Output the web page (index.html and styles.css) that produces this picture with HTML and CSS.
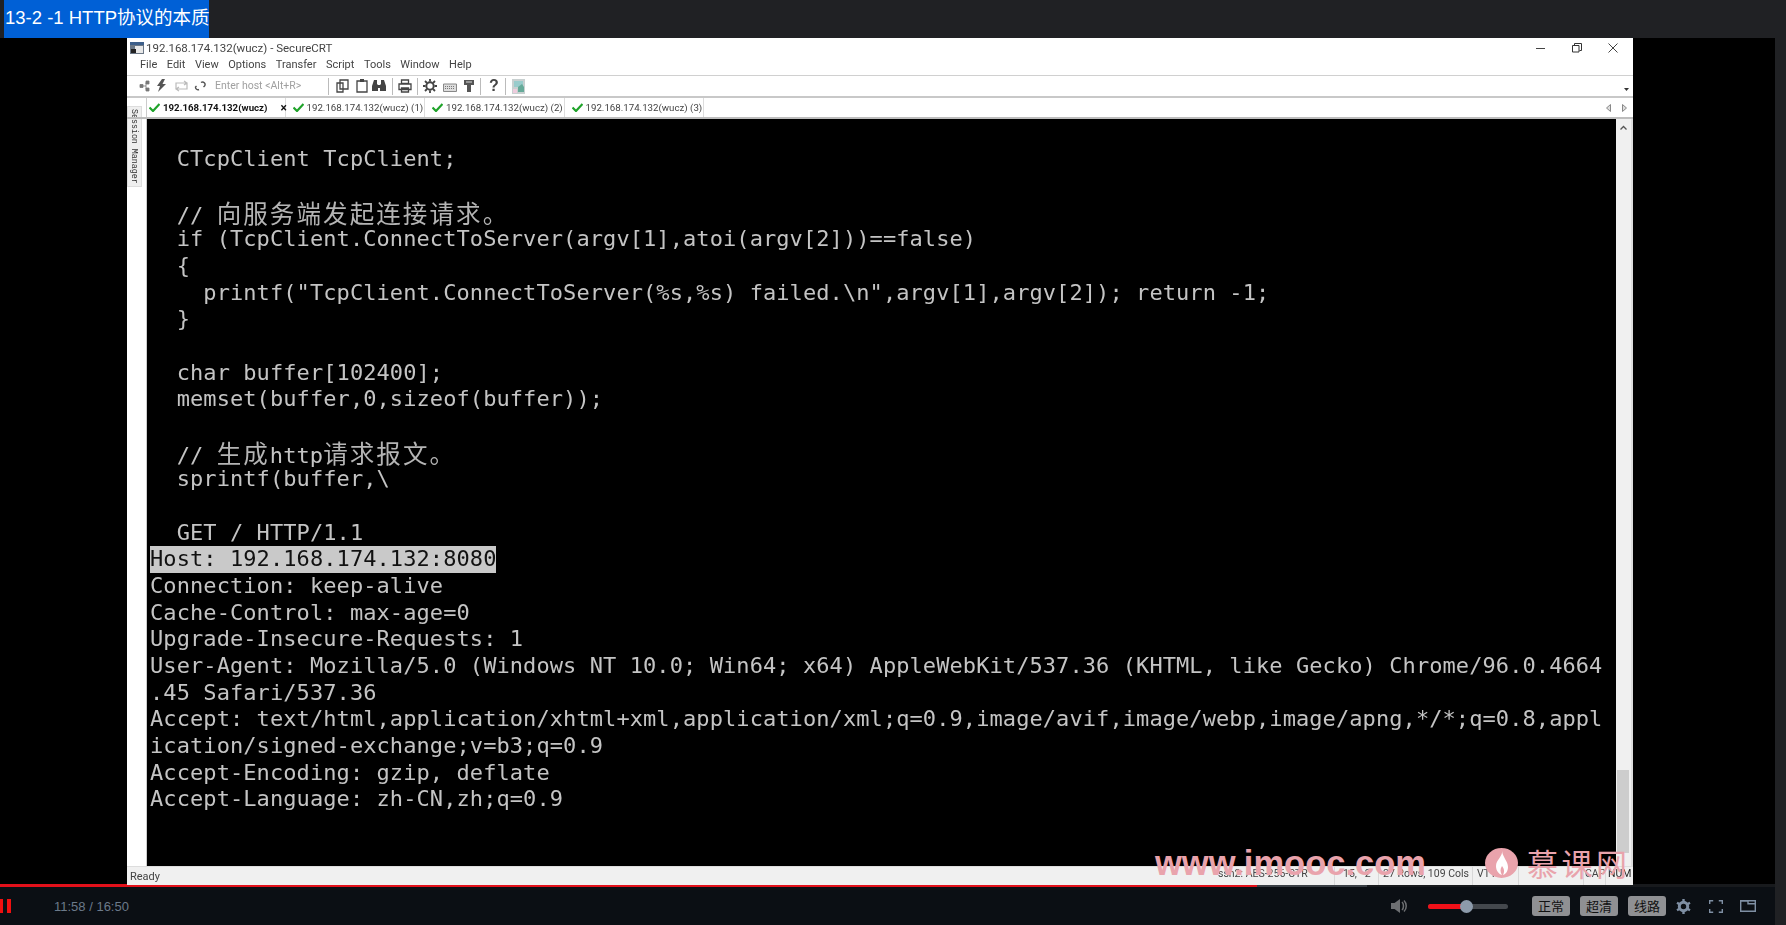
FILE: index.html
```html
<!DOCTYPE html>
<html lang="zh-CN">
<head>
<meta charset="utf-8">
<title>13-2 -1 HTTP协议的本质</title>
<link rel="stylesheet" href="styles.css">
</head>
<body>
<div class="page">
  <header class="topbar"><div class="course-title">13-2 -1 HTTP协议的本质</div></header>
  <div class="stage">
    <main class="video">
      <div class="crt">
        <div class="crt-title">
          <svg class="app-icon" width="16" height="14" viewBox="0 0 16 14"><rect x="1" y="1" width="14" height="12" fill="#6b7785"/><rect x="1" y="1" width="14" height="3" fill="#3d5f8a"/><rect x="6" y="5" width="8" height="7" fill="#e8e8e8"/><rect x="2" y="8" width="5" height="4" fill="#222"/></svg>
          <span class="crt-name">192.168.174.132(wucz) - SecureCRT</span>
          <div class="win-btns">
            <svg width="10" height="10" viewBox="0 0 10 10"><path d="M0 5.5h9" stroke="#444" fill="none"/></svg>
            <svg width="10" height="10" viewBox="0 0 10 10"><path d="M.5 2.500h6.500v6.500h-6.500zM2.500 2.500v-2h7v7h-2" stroke="#333" fill="none"/></svg>
            <svg width="10" height="10" viewBox="0 0 10 10"><path d="M.5.5l9 9M9.500.5l-9 9" stroke="#444" fill="none"/></svg>
          </div>
        </div>
        <nav class="crt-menu"><span>File</span><span>Edit</span><span>View</span><span>Options</span><span>Transfer</span><span>Script</span><span>Tools</span><span>Window</span><span>Help</span></nav>
        <div class="crt-tools">
          <svg class="t t-connect" width="11" height="12" viewBox="0 0 11 12"><path d="M7 1h3v3h-3zM7 8h3v3h-3zM1 4.500h3v3h-3zM4 6h3M7 2.500v7" fill="#777" stroke="#777" stroke-width=".8"/></svg>
          <svg class="t t-bolt" width="9" height="14" viewBox="0 0 9 14"><path d="M5 0L0 7h3L1 13 9 5H5.500L8 0z" fill="#555"/></svg>
          <svg class="t t-re" width="13" height="12" viewBox="0 0 13 12"><path d="M1 3h11v6h-11zM9 1l3 2-3 2M4 7l-3 2 3 2" fill="none" stroke="#bbb" stroke-width="1.200"/></svg>
          <svg class="t t-chain" width="12" height="12" viewBox="0 0 12 12"><path d="M7 2.500a2.500 2.500 0 0 1 3.500 3.500l-1 1M5 9.500a2.500 2.500 0 0 1-3.500-2.500l1-1" fill="none" stroke="#555" stroke-width="1.400"/></svg>
          <span class="host">Enter host &lt;Alt+R&gt;</span>
          <i class="sep s1"></i>
          <svg class="t t-copy" width="13" height="14" viewBox="0 0 13 14"><path d="M4 1h8v9h-8zM1 4h6v9h-6z" fill="#fff" stroke="#444" stroke-width="1.300"/></svg>
          <svg class="t t-paste" width="12" height="14" viewBox="0 0 12 14"><path d="M1 2h10v11h-10z" fill="#fff" stroke="#444" stroke-width="1.300"/><path d="M4 0h4v3h-4z" fill="#444"/></svg>
          <svg class="t t-find" width="14" height="14" viewBox="0 0 14 14"><path d="M2 1h3v4l1 1v6h-6v-5zM9 1h3l2 6v5h-6v-6l1-1zM5.500 6h3v3h-3z" fill="#444"/></svg>
          <i class="sep s2"></i>
          <svg class="t t-print" width="14" height="14" viewBox="0 0 14 14"><path d="M3.500 1h7v3.500h-7zM1 5h12v5.500h-12zM3.500 9h7v4h-7z" fill="#fff" stroke="#444" stroke-width="1.300"/></svg>
          <i class="sep s3"></i>
          <svg class="t t-gear" width="14" height="14" viewBox="0 0 14 14"><circle cx="7" cy="7" r="3.700" fill="none" stroke="#444" stroke-width="2"/><path d="M7 0v2.500M7 11.500v2.500M0 7h2.500M11.500 7h2.500M2 2l2 2M10 10l2 2M2 12l2-2M10 4l2-2" stroke="#444" stroke-width="1.800"/></svg>
          <svg class="t t-kbd" width="14" height="11" viewBox="0 0 14 11"><path d="M.5 3h13v7.500h-13z" fill="#ddd" stroke="#888"/><path d="M2 5.500h10M2 7.500h10" stroke="#777" stroke-dasharray="1 1"/></svg>
          <svg class="t t-key" width="12" height="14" viewBox="0 0 12 14"><path d="M1 1h10v5h-3v7h-4v-7h-3z" fill="#555"/><path d="M3 3h6" stroke="#ddd"/></svg>
          <i class="sep s4"></i>
          <span class="t t-help">?</span>
          <i class="sep s5"></i>
          <svg class="t t-img" width="13" height="15" viewBox="0 0 13 15"><path d="M0 0h13v15h-13z" fill="#c8d0d0"/><path d="M2 2h9v6h-9z" fill="#9cc"/><path d="M6 8l4-3 2 3v5h-6z" fill="#6a9"/><path d="M1 10h4v4h-4z" fill="#ecd"/></svg>
          <svg class="tool-drop" width="5" height="3" viewBox="0 0 5 3"><path d="M0 0h5l-2.500 3z" fill="#333"/></svg>
        </div>
        <div class="crt-tabs">
          <div class="tab active"><svg class="check" width="11" height="9" viewBox="0 0 11 9"><path d="M.5 4.500l3.500 3.500 6.500-7" fill="none" stroke="#1fa32a" stroke-width="2.200"/></svg><b>192.168.174.132(wucz)</b><span class="close">×</span></div>
          <div class="tab"><svg class="check" width="11" height="9" viewBox="0 0 11 9"><path d="M.5 4.500l3.500 3.500 6.500-7" fill="none" stroke="#1fa32a" stroke-width="2.200"/></svg><span>192.168.174.132(wucz) (1)</span></div>
          <div class="tab"><svg class="check" width="11" height="9" viewBox="0 0 11 9"><path d="M.5 4.500l3.500 3.500 6.500-7" fill="none" stroke="#1fa32a" stroke-width="2.200"/></svg><span>192.168.174.132(wucz) (2)</span></div>
          <div class="tab"><svg class="check" width="11" height="9" viewBox="0 0 11 9"><path d="M.5 4.500l3.500 3.500 6.500-7" fill="none" stroke="#1fa32a" stroke-width="2.200"/></svg><span>192.168.174.132(wucz) (3)</span></div>
          <div class="tab-arrows">
            <svg width="5" height="8" viewBox="0 0 5 8"><path d="M4.500.5v7l-4-3.500z" fill="#ddd" stroke="#888"/></svg>
            <svg width="5" height="8" viewBox="0 0 5 8"><path d="M.5.5v7l4-3.500z" fill="#ddd" stroke="#888"/></svg>
          </div>
        </div>
        <div class="crt-body">
          <aside class="session"><span class="session-tab">Session Manager</span></aside>
          <div class="terminal">
            <span class="l"> </span>
            <span class="l">  CTcpClient TcpClient;</span>
            <span class="l"> </span>
            <span class="l">  // <span class="cjk">向服务端发起连接请求。</span></span>
            <span class="l">  if (TcpClient.ConnectToServer(argv[1],atoi(argv[2]))==false)</span>
            <span class="l">  {</span>
            <span class="l">    printf("TcpClient.ConnectToServer(%s,%s) failed.\n",argv[1],argv[2]); return -1;</span>
            <span class="l">  }</span>
            <span class="l"> </span>
            <span class="l">  char buffer[102400];</span>
            <span class="l">  memset(buffer,0,sizeof(buffer));</span>
            <span class="l"> </span>
            <span class="l">  // <span class="cjk">生成</span>http<span class="cjk">请求报文。</span></span>
            <span class="l">  sprintf(buffer,\</span>
            <span class="l"> </span>
            <span class="l">  GET / HTTP/1.1</span>
            <span class="l"><span class="sel">Host: 192.168.174.132:8080</span></span>
            <span class="l">Connection: keep-alive</span>
            <span class="l">Cache-Control: max-age=0</span>
            <span class="l">Upgrade-Insecure-Requests: 1</span>
            <span class="l">User-Agent: Mozilla/5.0 (Windows NT 10.0; Win64; x64) AppleWebKit/537.36 (KHTML, like Gecko) Chrome/96.0.4664</span>
            <span class="l">.45 Safari/537.36</span>
            <span class="l">Accept: text/html,application/xhtml+xml,application/xml;q=0.9,image/avif,image/webp,image/apng,*/*;q=0.8,appl</span>
            <span class="l">ication/signed-exchange;v=b3;q=0.9</span>
            <span class="l">Accept-Encoding: gzip, deflate</span>
            <span class="l">Accept-Language: zh-CN,zh;q=0.9</span>
          </div>
          <div class="scrollbar">
            <svg class="sb-arrow" width="7" height="5" viewBox="0 0 7 5"><path d="M.5 4.500l3-3 3 3" fill="none" stroke="#555" stroke-width="1.300"/></svg>
            <div class="sb-thumb"></div>
          </div>
        </div>
        <footer class="crt-status">
          <span class="ready">Ready</span>
          <span class="cell c-ssh">ssh2: AES-256-CTR</span>
          <span class="cell c-pos">15,&nbsp;&nbsp; 2</span>
          <span class="cell c-rows">27 Rows, 109 Cols</span>
          <span class="cell c-vt">VT100</span>
          <span class="cell c-blank"></span>
          <span class="cell c-cap">CAP</span>
          <span class="cell c-num">NUM</span>
        </footer>
      </div>
      <div class="watermark">
        <span class="wm-url">www.imooc.com</span>
        <svg class="wm-logo" width="33" height="30" viewBox="0 0 33 30"><ellipse cx="16.500" cy="15" rx="16.500" ry="15" fill="#e9a3ac"/><path d="M17 3c1 5-6 9-6 15 0 5 3 8 6 9-2-3-2-6 0-9 2 3 3 5 1 9 3-1 5-4 5-8 0-6-5-9-6-16z" fill="#fff"/></svg>
        <span class="wm-cn">慕课网</span>
      </div>
    </main>
    <div class="progress"><div class="played"></div><div class="buffered"></div></div>
    <div class="controls">
      <div class="pause"><i></i><i></i></div>
      <span class="time">11:58 / 16:50</span>
      <svg class="vol" width="16" height="16" viewBox="0 0 16 16"><path d="M0 5h3.500L9 1v14l-5.500-4H0z" fill="#6d6f72"/><path d="M11 4c2 2 2 6 0 8M13 2.500c3 3 3 8 0 11" fill="none" stroke="#6d6f72" stroke-width="1.500"/></svg>
      <div class="slider"><div class="slider-fill"></div><div class="slider-knob"></div></div>
      <button class="pill p1">正常</button>
      <button class="pill">超清</button>
      <button class="pill">线路</button>
      <svg class="ic-gear" width="15" height="15" viewBox="0 0 15 15"><circle cx="7.500" cy="7.500" r="4.200" fill="none" stroke="#7f8fa3" stroke-width="3"/><path d="M7.500 0v3M7.500 12v3M1 3.700l2.600 1.500M11.400 9.800l2.600 1.500M1 11.300l2.600-1.500M11.400 5.200L14 3.700" stroke="#7f8fa3" stroke-width="2.400"/></svg>
      <svg class="ic-full" width="14" height="13" viewBox="0 0 14 13"><path d="M.7 4V.7h3.500M9.800.7h3.500V4M13.300 9v3.300H9.800M4.200 12.300H.7V9" fill="none" stroke="#7f8fa3" stroke-width="1.400"/></svg>
      <svg class="ic-pip" width="16" height="12" viewBox="0 0 16 12"><path d="M.7.7h14.600v10.600H.7z" fill="none" stroke="#7f8fa3" stroke-width="1.400"/><path d="M.7.7h7.300v3h7.300" fill="none" stroke="#7f8fa3" stroke-width="1.400"/></svg>
    </div>
  </div>
</div>
</body>
</html>
```

FILE: styles.css
```css
* { box-sizing: border-box; }
html, body { margin: 0; padding: 0; background: #000; }
.page { width: 1786px; height: 925px; background: #202124; overflow: hidden; display: flex; flex-direction: column; }

.topbar { height: 38px; padding-left: 4px; flex: none; }
.course-title { display: inline-block; height: 38px; width: 205px; padding-left: 1px; background: #0060d6; color: #fff; font: 18.500px/35px "Liberation Sans", "Noto Sans CJK SC", sans-serif; white-space: nowrap; }

.stage { flex: 1; margin-right: 11px; display: flex; flex-direction: column; min-height: 0; }
.video { flex: 1; background: #000; padding-left: 127px; position: relative; min-height: 0; }

.crt { width: 1506px; height: 847px; background: #fff; display: flex; flex-direction: column; color: #333; font: 11px Roboto, sans-serif; filter: blur(.35px); }
.crt-title { height: 19px; padding: 1px 15px 0 2px; display: flex; align-items: center; flex: none; }
.crt-name { margin-left: 1px; color: #444; white-space: nowrap; font-size: 11.500px; }
.win-btns { margin-left: auto; display: flex; gap: 26px; }

.crt-menu { height: 19px; padding: 0 0 3px 13px; display: flex; align-items: center; gap: 9.500px; border-bottom: 1px solid #d0d0d0; flex: none; color: #444; }

.crt-tools { height: 22px; position: relative; border-bottom: 2px solid #c8c8c8; flex: none; }
.t { position: absolute; top: 3px; }
.t-connect { left: 12px; top: 4px; }
.t-bolt { left: 30px; }
.t-re { left: 48px; top: 4px; }
.t-chain { left: 67px; top: 4px; }
.host { position: absolute; left: 88px; top: 3px; color: #a0a0a0; font-size: 10.500px; white-space: nowrap; }
.sep { position: absolute; top: 2px; height: 17px; width: 1px; background: #bbb; }
.s1 { left: 201px; }
.s2 { left: 265px; }
.s3 { left: 290px; }
.s4 { left: 353px; }
.s5 { left: 378px; }
.t-copy { left: 209px; }
.t-paste { left: 229px; }
.t-find { left: 245px; }
.t-print { left: 271px; }
.t-gear { left: 296px; }
.t-kbd { left: 316px; top: 5px; }
.t-key { left: 336px; }
.t-help { left: 362px; top: -1px; font: bold 16px/21px "Liberation Sans", sans-serif; color: #444; }
.t-img { left: 385px; }
.tool-drop { position: absolute; right: 4px; top: 12px; }

.crt-tabs { height: 21px; padding-left: 19px; display: flex; align-items: stretch; flex: none; position: relative; border-bottom: 2px solid #bdbdbd; }
.tab { width: 139.500px; display: flex; align-items: center; padding-left: 7px; gap: 2px; border-right: 1px solid #ddd; color: #444; white-space: nowrap; font-size: 9.700px; }
.tab.active { color: #111; background: #fff; border-left: 1px solid #ccc; padding-left: 2px; }
.tab b { font-size: 9.700px; }
.close { margin-left: 11px; font-weight: bold; font-size: 12px; }
.check { flex: none; margin-right: 1px; }
.tab-arrows { margin-left: auto; width: 27.500px; display: flex; align-items: center; gap: 11px; }

.crt-body { flex: 1; display: flex; min-height: 0; }
.session { width: 20px; flex: none; background: #fff; }
.session-tab { display: block; width: 15px; height: 81px; margin-top: -13px; background: #efefef; border: 1px solid #ddd; writing-mode: vertical-rl; text-align: center; font: 8.300px/13px "Liberation Mono", monospace; color: #333; }

.terminal { flex: 1; background: #000; color: #c4c4c4; font: 22px "DejaVu Sans Mono", monospace; letter-spacing: .08px; padding: .8px 0 0 3px; outline: 1px solid #ccc; overflow: hidden; }
.l { display: block; height: 26.670px; line-height: 26.670px; white-space: pre; }
.cjk { font-family: "Noto Sans CJK SC", sans-serif; font-size: 24.500px; letter-spacing: 2.100px; color: #b4b4b4; }
.sel { display: inline-block; background: #c9c9c9; color: #111; height: 27px; }

.scrollbar { width: 17px; flex: none; background: #f0f0f0; border-right: 2px solid #ddd; display: flex; flex-direction: column; align-items: flex-start; padding: 6px 0 13px 1px; }
.sb-arrow { margin-left: 3px; }
.sb-thumb { margin-top: auto; width: 12px; height: 83px; background: #cdcdcd; }

.crt-status { height: 19px; flex: none; background: #f0f0f0; display: flex; align-items: center; color: #444; font-size: 10.500px; border-top: 1px solid #ddd; }
.ready { margin-left: 3px; margin-right: auto; font-size: 11px; }
.cell { height: 100%; border-left: 1px solid #d8d8d8; padding-left: 4px; white-space: nowrap; }
.c-ssh { width: 125px; border-left: 0; padding-left: 9px; }
.c-pos { width: 44px; padding-left: 8px; }
.c-rows { width: 94px; }
.c-vt { width: 46px; }
.c-blank { width: 65px; }
.c-cap { width: 22px; padding-left: 1px; }
.c-num { width: 28px; padding-left: 2px; color: #222; }

.watermark { position: absolute; left: 1155px; top: 810px; height: 30px; display: flex; align-items: center; color: #e9a3ac; white-space: nowrap; }
.wm-url { font: bold 34.500px/30px "Liberation Sans", sans-serif; width: 330px; }
.wm-logo { flex: none; }
.wm-cn { margin-left: 9px; font: 31px/30px "Noto Sans CJK SC", sans-serif; letter-spacing: 3.500px; }

.progress { height: 3px; flex: none; background: #181a1d; display: flex; }
.played { width: 1257px; background: #e3101a; }
.buffered { width: 110px; background: #3a3f45; }

.controls { height: 38px; flex: none; background: #0b0f14; position: relative; display: flex; align-items: center; font-family: "Liberation Sans", sans-serif; }
.pause { display: flex; gap: 4px; width: 54px; height: 14px; }
.pause i { display: block; width: 3.500px; height: 14px; background: #f01010; }
.pause i:first-child { width: 3px; }
.time { color: #6c7a8a; font-size: 13px; width: 1337px; white-space: nowrap; }
.vol { flex: none; }
.slider { margin-left: 21px; width: 80px; height: 5px; border-radius: 3px; background: #44484d; position: relative; }
.slider-fill { width: 38px; height: 5px; border-radius: 3px 0 0 3px; background: #f01018; }
.slider-knob { position: absolute; left: 32px; top: -4px; width: 13px; height: 13px; border-radius: 50%; background: #8d9bab; }
.pill { margin-left: 10px; width: 38px; height: 20px; padding: 0; border: 0; border-radius: 3px; background: #8f9093; color: #111; font: 13px/20px "Noto Sans CJK SC", sans-serif; }
.pill.p1 { margin-left: 24px; }
.ic-gear { margin-left: 10px; flex: none; }
.ic-full { margin-left: 18px; flex: none; }
.ic-pip { margin-left: 17px; flex: none; }
```
